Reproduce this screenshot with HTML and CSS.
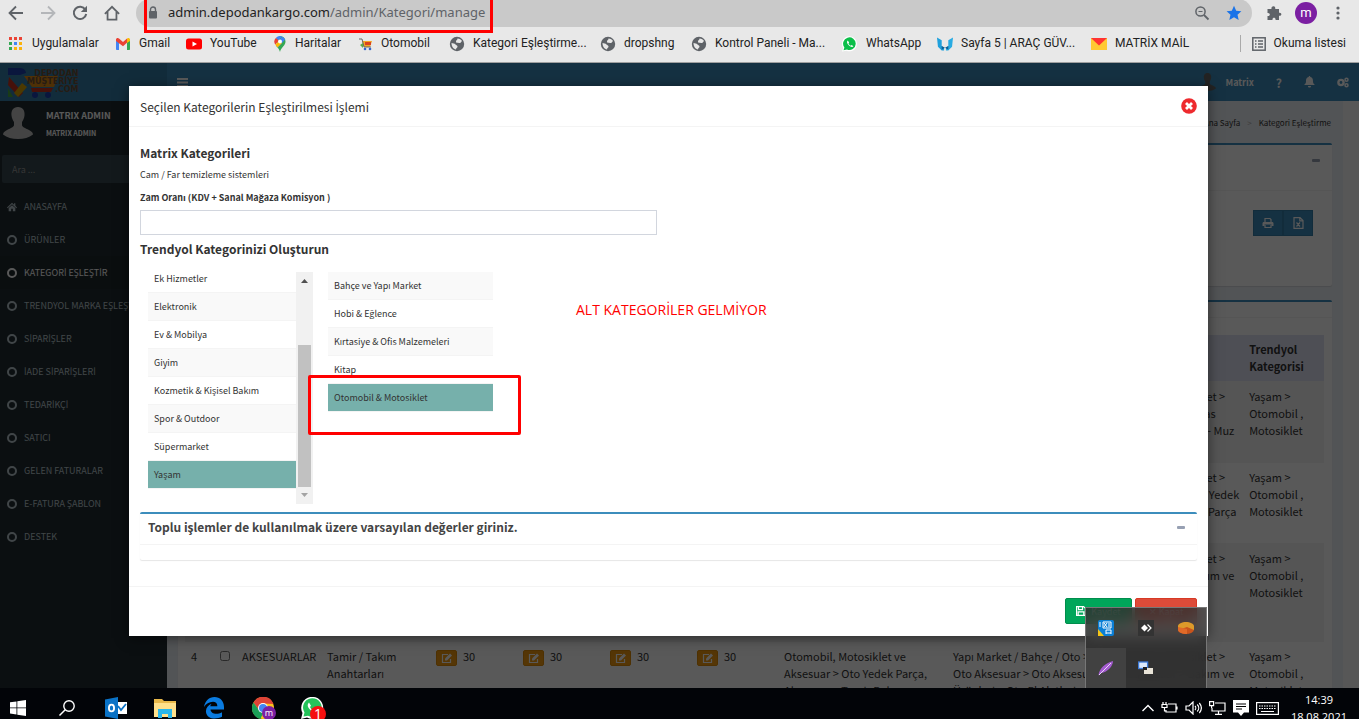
FILE: index.html
```html
<!DOCTYPE html>
<html lang="tr">
<head>
  <meta charset="UTF-8">
  <meta name="viewport" content="width=device-width, initial-scale=1.0">
  <title>Kategori Eşleştirme</title>
  <link rel="stylesheet" href="styles.css">
</head>
<body>

  <!-- shared icons -->
  <svg class="sprite" aria-hidden="true">
    <symbol id="i-globe" viewBox="0 0 16 16"><circle cx="8" cy="8" r="7.2" fill="#5f6368"/><path d="M2.500 7c1.500.5 3 .2 4 1.500.8 1 2.200.800 2 2.200-.2 1-1.500 1.300-1.500 2.800C4.500 13 2.500 10.500 2.500 7zM8.500 2.600c2 0 3.700 1 4.500 2.500-.8.600-.9 1.400-1.800 1.900-1 .4-1.600-.5-2.400-.2-1 .3-2-.4-1.800-1.500.2-1 1.500-1.200 1.500-2.700z" fill="#e8e8e8"/></symbol>
    <symbol id="i-circle" viewBox="0 0 10 12"><circle cx="5" cy="6" r="4" fill="none" stroke="currentColor" stroke-width="2"/></symbol>
    <symbol id="i-edit" viewBox="0 0 12 12"><path d="M9.500 7v3.500h-8v-8H7" fill="none" stroke="currentColor" stroke-width="1.200"/><path d="M4 6.500 9 1.500l2 2-5 5H4z" fill="currentColor"/></symbol>
    <symbol id="i-user" viewBox="0 0 30 32"><path d="M15 0c5 0 7 4 6.500 8.500-.3 3-1.500 5-2.500 6.500v3c0 2 3 3 7 5 3 1.500 4 3 4 4.500-4 3-9 4.500-15 4.500S4 30.500 0 27.500C0 26 1 24.500 4 23c4-2 7-3 7-5v-3C10 13.500 8.800 11.500 8.500 8.500 8 4 10 0 15 0z" fill="currentColor"/></symbol>
  </svg>

  <header class="browser">
    <div class="toolbar">
      <button class="tool-btn" aria-label="Geri"><svg width="16" height="16" viewBox="0 0 16 16"><path d="M15 8H2M8 1.500 1.500 8 8 14.500" fill="none" stroke="#5f6368" stroke-width="1.800"/></svg></button>
      <button class="tool-btn" aria-label="İleri"><svg width="16" height="16" viewBox="0 0 16 16"><path d="M1 8h13M8 1.500 14.500 8 8 14.500" fill="none" stroke="#b4b6b9" stroke-width="1.800"/></svg></button>
      <button class="tool-btn" aria-label="Yenile"><svg width="16" height="16" viewBox="0 0 16 16"><path d="M13.300 4.500A6.200 6.200 0 1 0 14.200 9" fill="none" stroke="#5f6368" stroke-width="2"/><path d="M15 .8V7H8.800z" fill="#5f6368"/></svg></button>
      <button class="tool-btn" aria-label="Ana sayfa"><svg width="16" height="16" viewBox="0 0 18 18"><path d="M1 10 9 2l8 8M4 8v8.500h10V8" fill="none" stroke="#5f6368" stroke-width="2"/></svg></button>
      <div class="address">
        <svg width="10" height="14" viewBox="0 0 10 14"><path d="M2.500 6V3.500a2.500 2.500 0 0 1 5 0V6" fill="none" stroke="#5f6368" stroke-width="1.400"/><rect x="1" y="5" width="8" height="7.500" rx="1" fill="#5f6368"/></svg>
        <span class="url">admin.depodankargo.com<span class="path">/admin/Kategori/manage</span></span>
        <svg width="16" height="16" viewBox="0 0 16 16"><circle cx="6.500" cy="6.500" r="4.600" fill="none" stroke="#5f6368" stroke-width="1.500"/><path d="M10 10l4.500 4.500" stroke="#5f6368" stroke-width="1.800"/><path d="M4.500 6.500h4" stroke="#5f6368"/></svg>
        <svg width="16" height="16" viewBox="0 0 16 16"><path d="M8 .8l2.200 4.900 5.200.5-3.900 3.500 1.200 5.300L8 12.200 3.300 15l1.200-5.300L.6 6.200l5.200-.5z" fill="#1a73e8"/></svg>
      </div>
      <svg width="16" height="16" viewBox="0 0 16 16"><path d="M1.500 4h4c-.8-3 3.500-4 3.800-1 .1.400 0 .8-.2 1H13v3.800c3-.8 3.300 3.700 0 3V15H9.500c.7-3-3.500-3.200-3 0H1.500v-4c3 .8 3.200-3.500 0-3z" fill="#5f6368"/></svg>
      <span class="profile">m</span>
      <svg width="4" height="16" viewBox="0 0 4 16" fill="#5f6368"><circle cx="2" cy="3" r="1.600"/><circle cx="2" cy="8" r="1.600"/><circle cx="2" cy="13" r="1.600"/></svg>
    </div>
    <nav class="bookmarks">
      <a href="#"><svg width="16" height="16" viewBox="0 0 16 16"><path d="M1 1h3v3H1zM11 1h3v3h-3zM6 1h3v3H6z" fill="#ea4335"/><path d="M1 6h3v3H1zM1 11h3v3H1z" fill="#34a853"/><path d="M6 6h3v3H6z" fill="#4285f4"/><path d="M11 6h3v3h-3zM6 11h3v3H6zM11 11h3v3h-3z" fill="#fbb30c"/></svg>Uygulamalar</a>
      <a href="#"><svg width="16" height="16" viewBox="0 0 16 16"><path d="M1 3.500h3V14H1.800A.8.800 0 0 1 1 13.200z" fill="#4285f4"/><path d="M12 3.500h3v9.700a.8.800 0 0 1-.8.800H12z" fill="#34a853"/><path d="M1 3.500C1 2 3 1.500 4 2.500L8 6l4-3.500v4.200L8 10.200 1 5z" fill="#ea4335"/><path d="M12 2.500c1-1 3-.5 3 1V5l-3 2z" fill="#fbbc04"/></svg>Gmail</a>
      <a href="#"><svg width="16" height="16" viewBox="0 0 16 16"><rect y="2.500" width="16" height="11" rx="2.500" fill="#f00"/><path d="M6.500 5.500v5L11 8z" fill="#fff"/></svg>YouTube</a>
      <a href="#"><svg width="14" height="16" viewBox="0 0 14 16"><path d="M7 0a5.500 5.500 0 0 1 5.500 5.500C12.500 10 8 11 7 16 6.500 13.500 4.500 11.500 3 9.800z" fill="#34a853"/><path d="M2.800 2A5.500 5.500 0 0 1 9 .4L5 5z" fill="#4285f4"/><path d="M9 .4a5.500 5.500 0 0 1 3.100 3L5 11.500 3 9.500z" fill="#4285f4"/><path d="M2.800 2 6 4.500 2.300 8.700A5.500 5.500 0 0 1 2.800 2z" fill="#ea4335"/><path d="M2.300 8.700 6 5l3 2-4.500 4.500z" fill="#fbbc04"/><circle cx="7" cy="5.500" r="2" fill="#fff"/></svg>Haritalar</a>
      <a href="#"><svg width="14" height="16" viewBox="0 0 14 16"><path d="M3 5h10l-2 6H5z" fill="#f5a623"/><path d="M6 6h6v3H6z" fill="#d9431e"/><path d="M0 3h3l2 8h7" fill="none" stroke="#666"/><path d="M1 9l3-2v5z" fill="#5aab4a"/><circle cx="6" cy="13" r="1.300" fill="#36c"/><circle cx="11" cy="13" r="1.300" fill="#36c"/></svg>Otomobil</a>
      <a href="#"><svg width="16" height="16"><use href="#i-globe"/></svg>Kategori Eşleştirme...</a>
      <a href="#"><svg width="16" height="16"><use href="#i-globe"/></svg>dropshng</a>
      <a href="#"><svg width="16" height="16"><use href="#i-globe"/></svg>Kontrol Paneli - Ma...</a>
      <a href="#"><svg width="16" height="16" viewBox="0 0 16 16"><path d="M0 15.500 1.200 12A7.500 7.500 0 1 1 4.500 14.700z" fill="#fff"/><path d="M1.500 14.200 2.400 11.500A6.300 6.300 0 1 1 5 13.500z" fill="#0cbf4a"/><path d="M5.800 4.500c-1.500 1-.8 3 1 4.800s3.600 2.300 4.600 1l-1.700-1.200-1 .6C7.700 9.300 6.900 8.400 6.500 7.500l.6-.9z" fill="#fff"/></svg>WhatsApp</a>
      <a href="#"><svg width="16" height="16" viewBox="0 0 17 16"><path d="M0 1l5 3v6l2.500 2v3H5l-4-4z" fill="#1fa0dc"/><path d="M17 1l-5 3v6l-2.500 2v3H12l4-4z" fill="#29abe2"/><path d="M5 10l3.500 2L12 10v4l-3.500-2L5 14z" fill="#0b5f95"/></svg>Sayfa 5 | ARAÇ GÜV...</a>
      <a href="#"><svg width="16" height="16" viewBox="0 0 16 16"><path d="M0 2h16v12H0z" fill="#ffc933"/><path d="M0 2h16L8 9.500z" fill="#f33"/></svg>MATRİX MAİL</a>
      <a href="#" class="reading"><svg width="14" height="14" viewBox="0 0 14 14"><rect x=".8" y=".8" width="12.400" height="12.400" fill="none" stroke="#5f6368" stroke-width="1.500"/><path d="M3 4h1.500M3 7h1.500M3 10h1.500M6 4h5M6 7h5M6 10h5" stroke="#5f6368" stroke-width="1.400"/></svg>Okuma listesi</a>
    </nav>
  </header>

  <div class="page">
    <div class="app">
      <header class="main-header">
        <a href="#" class="logo">
          <svg width="56" height="32" viewBox="0 0 56 32"><path d="M0 2h12c4 0 6 3 6 5l-6 2H0z" fill="#1d3fb0"/><path d="M1 11l14 16-4 4L0 19z" fill="#c8321e"/><path d="M0 22l5 9H0z" fill="#49a942"/><path d="M14 17l5 4-9 10-4-4z" fill="#d9a400"/><path d="M16 10h34l-4 11H24z" fill="#e08a12"/><path d="M23 22h22l-2 4H24z" fill="#c8321e"/><circle cx="27" cy="29" r="3" fill="#1d3fb0"/><circle cx="40" cy="29" r="3" fill="#1d3fb0"/></svg>
          <span>DEPODAN<br>MÜŞTERİYE<br>.COM</span>
        </a>
        <nav class="navbar">
          <button class="nav-btn" aria-label="Menü"><svg width="11" height="9" viewBox="0 0 11 9"><path d="M0 1h11M0 4.500h11M0 8h11" stroke="currentColor" stroke-width="1.800"/></svg></button>
          <div class="nav-right">
            <span class="nav-user"><svg width="17" height="18"><use href="#i-user"/></svg>Matrix</span>
            <b>?</b>
            <svg width="11" height="12" viewBox="0 0 11 12"><path d="M5.500 0c.6 0 .8.600.8 1C9 1.600 9 4 9 5.500c.1 1.700.7 2.700 2 3.500H0c1.300-.8 1.900-1.800 2-3.500C2 4 2 1.600 4.700 1c0-.4.2-1 .8-1zM4 10h3c0 1-.6 1.500-1.500 1.500S4 11 4 10z" fill="currentColor"/></svg>
            <svg width="12" height="11" viewBox="0 0 12 11"><circle cx="4" cy="5.500" r="2.600" fill="none" stroke="currentColor" stroke-width="2.400"/><circle cx="9.500" cy="2.700" r="1.500" fill="none" stroke="currentColor" stroke-width="1.500"/><circle cx="9.500" cy="8.300" r="1.500" fill="none" stroke="currentColor" stroke-width="1.500"/></svg>
          </div>
        </nav>
      </header>

      <div class="wrapper">
        <aside class="sidebar">
          <div class="user-panel">
            <svg width="30" height="32"><use href="#i-user"/></svg>
            <div>
              <p>MATRIX ADMIN</p>
              <small>MATRIX ADMIN</small>
            </div>
          </div>
          <input class="search" type="text" placeholder="Ara ..." aria-label="Ara">
          <ul class="menu">
            <li><a href="#"><svg width="10" height="12" viewBox="0 0 12 12"><path d="M6 1 0 6.500l.8.900L6 2.800l5.200 4.600.8-.9-2-1.900V1.500H8.500v1.700zM2 7.300V11h3V8h2v3h3V7.300L6 3.800z" fill="currentColor"/></svg>ANASAYFA</a></li>
            <li><a href="#"><svg width="10" height="12"><use href="#i-circle"/></svg>ÜRÜNLER</a></li>
            <li class="active"><a href="#"><svg width="10" height="12"><use href="#i-circle"/></svg><span>KATEGOR<i>İ</i> EŞLEŞT<i>İ</i>R</span></a></li>
            <li><a href="#"><svg width="10" height="12"><use href="#i-circle"/></svg><span>TRENDYOL MARKA EŞLEŞT<i>İ</i>R</span></a></li>
            <li><a href="#"><svg width="10" height="12"><use href="#i-circle"/></svg><span>S<i>İ</i>PAR<i>İ</i>ŞLER</span></a></li>
            <li><a href="#"><svg width="10" height="12"><use href="#i-circle"/></svg><span><i>İ</i>ADE S<i>İ</i>PAR<i>İ</i>ŞLER<i>İ</i></span></a></li>
            <li><a href="#"><svg width="10" height="12"><use href="#i-circle"/></svg><span>TEDAR<i>İ</i>KÇ<i>İ</i></span></a></li>
            <li><a href="#"><svg width="10" height="12"><use href="#i-circle"/></svg>SATICI</a></li>
            <li><a href="#"><svg width="10" height="12"><use href="#i-circle"/></svg>GELEN FATURALAR</a></li>
            <li><a href="#"><svg width="10" height="12"><use href="#i-circle"/></svg>E-FATURA ŞABLON</a></li>
            <li><a href="#"><svg width="10" height="12"><use href="#i-circle"/></svg>DESTEK</a></li>
          </ul>
        </aside>

        <main class="content">
          <div class="breadcrumb"><a href="#">Ana Sayfa</a><span class="sep">&gt;</span><span>Kategori Eşleştirme</span></div>
          <section class="box box-filter">
            <div class="box-header"><button class="collapse" aria-label="Daralt"></button></div>
            <div class="box-tools">
              <button aria-label="Yazdır"><svg width="12" height="12" viewBox="0 0 12 12"><path d="M3 5V1.500h5L9 2.500V5M3 8v2.500h6V8" fill="none" stroke="currentColor" stroke-width="1.200"/><path d="M.5 9V6.500C.5 5.500 1 5 2 5h8c1 0 1.500.5 1.500 1.500V9H9.500V7.500h-7V9z" fill="currentColor"/></svg></button>
              <button aria-label="Excel"><svg width="11" height="12" viewBox="0 0 11 12"><path d="M1 .6h6l3 3v7.800H1zM6.800.6v3.200H10M3.500 5.500l3.500 4M7 5.500l-3.500 4" fill="none" stroke="currentColor" stroke-width="1.200"/></svg></button>
            </div>
          </section>

          <section class="box box-list">
            <div class="box-header"></div>
            <table>
              <colgroup>
                <col class="c-no"><col class="c-check"><col class="c-group"><col class="c-name">
                <col class="c-rate"><col class="c-rate"><col class="c-rate"><col class="c-rate">
                <col class="c-path"><col class="c-n11"><col class="c-gg"><col>
              </colgroup>
              <thead>
                <tr><th colspan="11"></th><th>Trendyol<br>Kategorisi</th></tr>
              </thead>
              <tbody>
                <tr><td colspan="10"></td><td>Otomobil, Motosiklet &gt;<br>Aksesuarlar &gt; Paspas<br>Temizlik, Oto Koku - Muz</td><td>Yaşam &gt;<br>Otomobil ,<br>Motosiklet</td></tr>
                <tr><td colspan="10"></td><td>Otomobil, Motosiklet &gt;<br>Oto Aksesuar &gt; Oto Yedek<br>Oto, Motor &gt; Oto El Parça</td><td>Yaşam &gt;<br>Otomobil ,<br>Motosiklet</td></tr>
                <tr class="tall"><td colspan="10"></td><td>Otomobil, Motosiklet &gt;<br>Oto Aksesuar &gt; Bakım ve</td><td>Yaşam &gt;<br>Otomobil ,<br>Motosiklet</td></tr>
                <tr>
                  <td>4</td>
                  <td><input type="checkbox" aria-label="4. satırı seç"></td>
                  <td>AKSESUARLAR</td>
                  <td>Tamir / Takım<br>Anahtarları</td>
                  <td><button class="edit" aria-label="Düzenle"><svg width="12" height="12"><use href="#i-edit"/></svg></button>30</td>
                  <td><button class="edit" aria-label="Düzenle"><svg width="12" height="12"><use href="#i-edit"/></svg></button>30</td>
                  <td><button class="edit" aria-label="Düzenle"><svg width="12" height="12"><use href="#i-edit"/></svg></button>30</td>
                  <td><button class="edit" aria-label="Düzenle"><svg width="12" height="12"><use href="#i-edit"/></svg></button>30</td>
                  <td>Otomobil, Motosiklet ve<br>Aksesuar &gt; Oto Yedek Parça,<br>Aksesuar &gt; Tamir Bakım</td>
                  <td>Yapı Market / Bahçe / Oto &gt;<br>Oto Aksesuar &gt; Oto Aksesuar<br>Ürünleri &gt; Oto El Aletleri</td>
                  <td>Otomobil, Motosiklet &gt;<br>Oto Aksesuar &gt; Bakım ve</td>
                  <td>Yaşam &gt;<br>Otomobil ,<br>Motosiklet</td>
                </tr>
              </tbody>
            </table>
          </section>
        </main>
        <div class="page-scroll"></div>
      </div>
    </div>

    <div class="modal-backdrop">
      <div class="modal" role="dialog" aria-labelledby="modal-title">
        <div class="modal-header">
          <h4 id="modal-title">Seçilen Kategorilerin Eşleştirilmesi <i>İ</i>şlemi</h4>
          <button class="close" aria-label="Kapat"><svg width="16" height="16" viewBox="0 0 16 16"><circle cx="8" cy="8" r="7.800" fill="#ee2a2e"/><path d="M5 5l6 6M11 5l-6 6" stroke="#fff" stroke-width="2.800"/></svg></button>
        </div>
        <div class="modal-body">
          <h5>Matrix Kategorileri</h5>
          <p>Cam / Far temizleme sistemleri</p>
          <label for="rate">Zam Oranı (KDV + Sanal Mağaza Komisyon )</label>
          <input id="rate" class="rate" type="text">
          <h5>Trendyol Kategorinizi Oluşturun</h5>
          <div class="pickers">
            <div class="picker-scroll">
              <ul>
                <li>Ek Hizmetler</li>
                <li>Elektronik</li>
                <li>Ev &amp; Mobilya</li>
                <li>Giyim</li>
                <li>Kozmetik &amp; Kişisel Bakım</li>
                <li>Spor &amp; Outdoor</li>
                <li>Süpermarket</li>
                <li class="selected">Yaşam</li>
              </ul>
              <div class="scrollbar">
                <svg width="17" height="17" viewBox="0 0 17 17"><path d="M5 11h7L8.500 7z" fill="#505050"/></svg>
                <div class="thumb"></div>
                <svg width="17" height="17" viewBox="0 0 17 17"><path d="M5 6h7l-3.500 4z" fill="#a3a3a3"/></svg>
              </div>
            </div>
            <ul class="picker-sub">
              <li>Bahçe ve Yapı Market</li>
              <li>Hobi &amp; Eğlence</li>
              <li>Kırtasiye &amp; Ofis Malzemeleri</li>
              <li>Kitap</li>
              <li class="selected">Otomobil &amp; Motosiklet</li>
            </ul>
          </div>
          <section class="box box-defaults">
            <div class="box-header"><h5>Toplu işlemler de kullanılmak üzere varsayılan değerler giriniz.</h5><button class="collapse" aria-label="Daralt"></button></div>
          </section>
        </div>
        <div class="modal-footer">
          <button class="btn btn-save"><svg width="10" height="10" viewBox="0 0 10 10"><path d="M.6.600h7l1.800 1.800v7H.6zM2.500.6v3h4v-3M2.200 9.400v-3.500h5.600v3.500" fill="none" stroke="#fff" stroke-width="1.200"/></svg>Kaydet</button>
          <button class="btn btn-close">✕ Kapat</button>
        </div>
      </div>
    </div>
  </div>

  <footer class="taskbar">
    <div class="tasks">
      <svg width="16" height="16" viewBox="0 0 16 16"><path d="M0 2.300 6.500 1.400v6.100H0zM7.300 1.300 16 0v7.500H7.300zM0 8.300h6.500v6.100L0 13.500zM7.300 8.300H16V16l-8.700-1.300z" fill="#fff"/></svg>
      <svg width="18" height="18" viewBox="0 0 18 18"><circle cx="11" cy="7" r="5.200" fill="none" stroke="#fff" stroke-width="1.400"/><path d="M7.200 10.800 1.500 16.500" stroke="#fff" stroke-width="1.500"/></svg>
      <svg width="22" height="22" viewBox="0 0 22 22"><path d="M10 5h12v12H10z" fill="#fff"/><path d="M11 6h10v10H11z" fill="#2a78c5"/><path d="M12 5h10v12H12z" fill="#fff"/><path d="M13 9l3 4 5-6" fill="none" stroke="#0a72c6" stroke-width="1.800"/><path d="M0 2.500 13 0v22L0 19.500z" fill="#0a72c6"/><ellipse cx="6.500" cy="11" rx="2.600" ry="3.400" fill="none" stroke="#fff" stroke-width="1.800"/></svg>
      <svg width="22" height="20" viewBox="0 0 22 20"><path d="M0 1h8l2 2h12v16H0z" fill="#e8b84a"/><path d="M0 5h22v14H0z" fill="#ffe08a"/><path d="M4 11h14v9h-4v-4H8v4H4z" fill="#29b6ea"/></svg>
      <svg width="20" height="22" viewBox="0 0 20 22"><path d="M0 10C1 4 5 0 10.500 0 16 0 20 4 20 10v2.500H6.500c.3 4.500 6.500 5.500 11.500 2.700v4.500c-6 3-15 2.500-16-4.500-.5-4 2-7 5.500-8.500C6.500 8 6.300 9 6.300 9.300h7C13.500 6 11.500 4.800 9 4.800 5 4.800 2 7 0 10z" fill="#0a7be0"/></svg>
      <svg width="24" height="22" viewBox="0 0 24 22"><circle cx="11" cy="11" r="11" fill="#fcc31e"/><path d="M1.500 5.500A11 11 0 0 1 21.500 7L11 6.500 7 13z" fill="#de4437"/><path d="M1.500 5.500 7 13l4 3-2.500 6A11 11 0 0 1 1.500 5.500z" fill="#1a9e57"/><circle cx="11" cy="11" r="5" fill="#fff"/><circle cx="11" cy="11" r="4" fill="#4285f4"/><circle cx="17" cy="16" r="7" fill="#7b1fa2"/><text x="17" y="19" text-anchor="middle" class="badge-text">m</text></svg>
      <svg width="25" height="23" viewBox="0 0 25 23"><path d="M0 22 1.500 16A11 11 0 1 1 6 20.500z" fill="#fff"/><path d="M2.500 19.500 3.500 15.500A9.300 9.300 0 1 1 7 18.700z" fill="#23c35a"/><path d="M8 5.500C5.500 8 7 11 10 13.500s5.500 3 7 1.500l-3-2.500-1.500 1C11 13 9.500 11.500 9 10l1-1.200z" fill="#fff"/><circle cx="17" cy="17" r="8" fill="#f50f0f"/><text x="17" y="22" text-anchor="middle" class="badge-count">1</text></svg>
    </div>
    <div class="tray">
      <svg width="12" height="8" viewBox="0 0 12 8"><path d="M.5 7 6 1.500 11.500 7" fill="none" stroke="#fff" stroke-width="1.400"/></svg>
      <svg width="17" height="14" viewBox="0 0 17 14"><path d="M7 3h8v8H5V9M16 5.500v3" fill="none" stroke="#fff" stroke-width="1.200"/><path d="M1 3.500h5v3H1zM2 1v2M5 1v2M3.500 7v3H5" fill="none" stroke="#fff" stroke-width="1.200"/></svg>
      <svg width="17" height="14" viewBox="0 0 17 14"><path d="M1 5h3l4-4v12L4 9H1zM10 5c1 1 1 3 0 4M12.200 3.500c2 2 2 5 0 7M14.300 2c2.500 3 2.500 7 0 10" fill="none" stroke="#fff" stroke-width="1.200"/></svg>
      <svg width="17" height="14" viewBox="0 0 17 14"><path d="M6 2h10v8H3V7M9.500 10v3M6 13.300h7" fill="none" stroke="#fff" stroke-width="1.200"/><path d="M.6.600h4v4h-4zM2.600 4.600V7" fill="none" stroke="#fff" stroke-width="1.200"/></svg>
      <svg width="16" height="16" viewBox="0 0 16 16"><path d="M0 0h16v12.500h-5L8 16l-3-3.500H0z" fill="#fff"/><path d="M3 4h10M3 6.500h10M3 9h6" stroke="#000"/></svg>
      <svg width="23" height="13" viewBox="0 0 23 13"><rect x=".6" y=".6" width="21.800" height="11.800" fill="none" stroke="#fff" stroke-width="1.200"/><path d="M3 4h17M3 6.500h17" stroke="#fff" stroke-width="1.200" stroke-dasharray="1.500 1"/><path d="M5 9.500h13" stroke="#fff"/></svg>
      <div class="clock">14:39<br>18.08.2021</div>
    </div>
  </footer>

  <!-- hidden icons flyout -->
  <div class="flyout">
    <div><svg width="16" height="16" viewBox="0 0 16 16"><rect width="16" height="16" rx="2" fill="#0a7fd6"/><path d="M0 9l6 7H0z" fill="#f5c518"/><path d="M5 2h8v6H5zM6 3l3 4M9 3L6 7M11 3v4M8 10h5M8 13h5M8 10v4M13 10v4M2 2v5" fill="none" stroke="#fff"/></svg></div>
    <div><svg width="16" height="16" viewBox="0 0 16 16"><rect width="16" height="16" fill="#333"/><path d="M3 8l3.500-3.500L10 8l-3.500 3.500z" fill="#fff"/><path d="M9.500 4.500 13 8l-3.500 3.500" fill="none" stroke="#fff" stroke-width="1.200"/></svg></div>
    <div><svg width="16" height="12" viewBox="0 0 16 12"><ellipse cx="8" cy="7.500" rx="8" ry="4.500" fill="#c9541c"/><path d="M0 4c0-2 4-4 8-4s8 2 8 4v4L9 5 0 8z" fill="#dd9a2a"/><path d="M0 5l9 2v5C4 12 0 10 0 8z" fill="#e06a28"/></svg></div>
    <div class="hover"><svg width="16" height="16" viewBox="0 0 16 16"><path d="M.5 15.500C1 9 7 3 15 1c0 5-5 11-12 12z" fill="#a45cd0"/><path d="M1 15 13 3" stroke="#e9d3f7"/></svg></div>
    <div><svg width="16" height="14" viewBox="0 0 16 14"><rect x=".6" y="1" width="9" height="6.500" fill="#dce9fa" stroke="#3d7bd9" stroke-width="1.300"/><path d="M6 7h9v6H6z" fill="#e9e4d8"/><path d="M5 6h4v3H5z" fill="#222"/></svg></div>
  </div>

  <div class="mark mark-url"></div>
  <div class="mark mark-item"></div>
  <div class="mark-text">ALT KATEGORİLER GELMİYOR</div>

</body>
</html>
```
FILE: styles.css
```css
* {
  box-sizing: border-box;
}

body {
  margin: 0;
  height: 100vh;
  display: flex;
  flex-direction: column;
  overflow: hidden;
  position: relative;
  font-family: "Noto Sans CJK SC", "Open Sans", sans-serif;
  font-size: 11px;
  line-height: 17px;
  color: #333;
}

a {
  color: inherit;
  text-decoration: none;
}

button {
  border: 0;
  padding: 0;
  background: none;
  color: inherit;
  font: inherit;
}

input {
  font: inherit;
}

h4, h5, p, ul {
  margin: 0;
  padding: 0;
  list-style: none;
}

svg {
  flex: none;
  display: block;
}

/* dotted capital I, missing from the main font */
i {
  font-family: "Open Sans", sans-serif;
  font-style: normal;
  line-height: 1;
}

.sprite {
  position: absolute;
  width: 0;
  height: 0;
}

/* browser chrome */
.browser {
  flex: none;
  background: #e8e8e8;
  border-bottom: 1px solid #a0a0a0;
  font-family: Roboto, sans-serif;
  font-size: 12px;
  color: #222;
}

.toolbar {
  height: 25px;
  display: flex;
  align-items: center;
  padding: 0 19px 0 8px;
}

.tool-btn {
  width: 32px;
  flex: none;
}

.address {
  flex: 1;
  height: 28px;
  display: flex;
  align-items: center;
  gap: 16px;
  padding: 0 10px 0 12px;
  margin-right: 14px;
  background: #c9c9c9;
  border-radius: 14px;
}

.url {
  flex: 1;
  margin-left: -6px;
  font-family: "Noto Sans", sans-serif;
  font-size: 13px;
  color: #222;
}

.path {
  color: #5f6368;
}

.profile {
  width: 22px;
  height: 22px;
  margin: 0 19px 0 13px;
  border-radius: 50%;
  background: #7b1fa2;
  color: #fff;
  font-size: 13px;
  line-height: 21px;
  text-align: center;
}

.bookmarks {
  height: 37px;
  display: grid;
  grid-template-columns: 107px 71px 87px 86px 90px 151px 91px 151px 95px 154px 1fr auto;
  align-items: center;
  padding: 0 13px 0 8px;
}

.bookmarks a {
  display: flex;
  align-items: center;
  gap: 8px;
  white-space: nowrap;
}

.bookmarks .reading {
  padding-left: 11px;
  border-left: 1px solid #aaa;
}

/* admin panel */
.page {
  flex: 1;
  min-height: 0;
  position: relative;
  overflow: hidden;
}

.app {
  height: 100%;
  display: flex;
  flex-direction: column;
}

.main-header {
  flex: none;
  height: 38px;
  display: flex;
  background: #3c8dbc;
  color: #fff;
}

.logo {
  width: 167px;
  display: flex;
  align-items: center;
  padding-left: 8px;
  background: #367fa9;
}

.logo span {
  margin-left: -37px;
  font-family: "DejaVu Sans", sans-serif;
  font-size: 8px;
  font-weight: bold;
  line-height: 8px;
  text-align: right;
  color: #6e5037;
}

.navbar {
  flex: 1;
  display: flex;
  align-items: center;
  justify-content: space-between;
  padding: 0 10px;
}

.nav-right {
  display: flex;
  align-items: center;
  gap: 22px;
  font-size: 9px;
}

.nav-right b {
  font-size: 12px;
}

.nav-user {
  display: flex;
  align-items: center;
  gap: 9px;
  font-weight: bold;
}

.nav-user svg {
  color: #666;
}

.wrapper {
  flex: 1;
  min-height: 0;
  display: flex;
}

.sidebar {
  width: 167px;
  flex: none;
  overflow: hidden;
  background: #222d32;
  color: #b8c7ce;
  font-size: 9px;
}

.user-panel {
  display: flex;
  gap: 13px;
  height: 54px;
  padding: 6px 3px;
  color: #fff;
}

.user-panel svg {
  color: #c4c4c4;
}

.user-panel p {
  font-weight: bold;
  line-height: 18px;
}

.user-panel small {
  display: block;
  font-size: 7px;
  font-weight: bold;
}

.search {
  display: block;
  width: 163px;
  height: 28px;
  margin: 0 2px 7px;
  padding: 0 10px;
  border: 0;
  border-radius: 2px;
  background: #374850;
  color: #999;
}

.search::placeholder {
  color: #999;
}

.menu a {
  display: flex;
  align-items: center;
  gap: 7px;
  height: 33px;
  padding-left: 7px;
  white-space: nowrap;
}

.menu .active {
  background: #1e282c;
  color: #fff;
}

.content {
  flex: 1;
  min-width: 0;
  padding: 0 11px;
  background: #ecf0f5;
}

.page-scroll {
  width: 16px;
  background: #fafafa;
}

.breadcrumb {
  display: flex;
  justify-content: flex-end;
  gap: 7px;
  padding: 13px 1px 12px;
  font-size: 8px;
}

.sep {
  color: #aaa;
}

.box {
  background: #fff;
  border-top: 2px solid #3c8dbc;
  border-radius: 2px;
  box-shadow: 0 1px 1px rgba(0, 0, 0, 0.1);
}

.box-header {
  display: flex;
  justify-content: space-between;
  border-bottom: 1px solid #f4f4f4;
}

.collapse {
  width: 8px;
  height: 3px;
  margin-left: auto;
  border-radius: 1px;
  background: #97a0b3;
}

.box-filter {
  height: 143px;
  margin-bottom: 14px;
}

.box-filter .box-header {
  height: 46px;
  padding: 14px 12px;
}

.box-tools {
  display: flex;
  justify-content: flex-end;
  padding: 19px;
}

.box-tools button {
  width: 30px;
  height: 26px;
  display: flex;
  align-items: center;
  justify-content: center;
  border: 1px solid #367fa9;
  background: #3c8dbc;
  color: #fff;
}

.box-list {
  padding-right: 8px;
  padding-left: 7px;
}

.box-list .box-header {
  height: 16px;
  margin: 0 -8px 17px -7px;
}

table {
  width: 100%;
  table-layout: fixed;
  border-collapse: collapse;
}

th, td {
  padding: 6px;
  text-align: left;
  vertical-align: top;
  white-space: nowrap;
}

th {
  background: #dfe1f3;
}

td {
  height: 81px;
  border-top: 1px solid #f4f4f4;
}

.tall td {
  height: 98px;
}

tbody tr:nth-child(odd) {
  background: #f4f4f4;
}

td input {
  width: 10px;
  height: 10px;
  margin: 3px 0;
}

.c-no { width: 29px; }
.c-check { width: 22px; }
.c-group { width: 85px; }
.c-name { width: 109px; }
.c-rate { width: 87px; }
.c-path { width: 169px; }
.c-n11 { width: 156px; }
.c-gg { width: 140px; }

.edit {
  width: 21px;
  height: 16px;
  display: inline-flex;
  align-items: center;
  justify-content: center;
  margin-right: 6px;
  vertical-align: middle;
  border: 1px solid #e08e0b;
  border-radius: 2px;
  background: #f39c12;
  color: #fff;
}

/* dialog */
.modal-backdrop {
  position: absolute;
  inset: 0;
  padding: 23px 151px 0 129px;
  background: rgba(0, 0, 0, 0.65);
}

.modal {
  background: #fff;
  box-shadow: 0 2px 12px rgba(0, 0, 0, 0.5);
}

.modal-header {
  display: flex;
  align-items: center;
  justify-content: space-between;
  height: 41px;
  padding: 0 11px;
  border-bottom: 1px solid #f4f4f4;
}

.modal-header h4 {
  font-size: 12px;
  font-weight: normal;
}

.modal-body {
  padding: 16px 11px 26px;
  font-size: 9px;
}

h5 {
  font-size: 12px;
  line-height: 20px;
}

.modal-body p {
  padding: 3px 0 6px;
}

.modal-body label {
  display: block;
  font-weight: bold;
}

.rate {
  display: block;
  width: 517px;
  height: 25px;
  margin: 4px 0;
  border: 1px solid #d2d6de;
}

.pickers {
  display: flex;
  gap: 15px;
  padding: 13px 8px 8px;
}

.picker-scroll {
  width: 165px;
  height: 232px;
  display: flex;
  overflow: hidden;
}

.picker-scroll ul {
  flex: 1;
  margin-top: -7px;
}

.picker-sub {
  width: 165px;
}

.pickers li {
  height: 28px;
  padding: 0 6px;
  line-height: 27px;
  border-bottom: 1px solid #f4f4f4;
}

.picker-scroll li:nth-child(even),
.picker-sub li:nth-child(odd) {
  background: #f9f9f9;
}

.pickers li.selected {
  background: #76b0ab;
}

.scrollbar {
  width: 17px;
  display: flex;
  flex-direction: column;
  background: #f1f1f1;
}

.thumb {
  flex: 1;
  margin: 56px 2px 0;
  background: #c1c1c1;
}

.box-defaults {
  height: 48px;
}

.box-defaults .box-header {
  height: 31px;
  padding: 3px 12px 0 8px;
}

.box-defaults .collapse {
  margin-top: 9px;
}

.box-defaults h5 {
  color: #444;
}

.modal-footer {
  display: flex;
  justify-content: flex-end;
  gap: 3px;
  padding: 11px 11px 12px;
  border-top: 1px solid #f4f4f4;
}

.btn {
  height: 26px;
  display: flex;
  align-items: center;
  justify-content: center;
  gap: 5px;
  border-radius: 2px;
  font-size: 9px;
  color: #fff;
}

.btn-save {
  width: 67px;
  border: 1px solid #008d4c;
  background: #00a65a;
}

.btn-close {
  width: 62px;
  border: 1px solid #d73925;
  background: #dd4b39;
}

/* windows taskbar */
.taskbar {
  flex: none;
  height: 31px;
  display: flex;
  align-items: flex-start;
  justify-content: space-between;
  overflow: hidden;
  background: #020408;
  color: #fff;
  font-family: "Open Sans", sans-serif;
}

.tasks {
  height: 40px;
  display: grid;
  grid-template-columns: 48px 47px 49px 50px 48px 49px auto;
  align-items: center;
  padding-left: 10px;
}

.tray {
  height: 40px;
  display: flex;
  align-items: center;
  gap: 7px;
  padding-right: 12px;
}

.clock {
  margin-left: 5px;
  text-align: center;
}

.badge-text {
  font-size: 9px;
  fill: #fff;
}

.badge-count {
  font-size: 14px;
  fill: #fff;
}

.flyout {
  position: absolute;
  right: 152px;
  bottom: 31px;
  width: 122px;
  height: 81px;
  display: grid;
  grid-template-columns: 40px 40px 40px;
  grid-template-rows: 40px 40px;
  border: 1px solid #777;
  border-bottom: 0;
  background: rgba(43, 43, 43, 0.82);
  backdrop-filter: blur(8px);
}

.flyout div {
  display: flex;
  align-items: center;
  justify-content: center;
}

.flyout .hover {
  background: #414141;
}

/* notes drawn over the screen */
.mark {
  position: absolute;
  border: 3px solid #f00;
}

.mark-url {
  left: 144px;
  top: -6px;
  width: 349px;
  height: 39px;
}

.mark-item {
  left: 308px;
  top: 375px;
  width: 213px;
  height: 60px;
  border-radius: 2px;
}

.mark-text {
  position: absolute;
  left: 576px;
  top: 301px;
  font-family: "Open Sans", sans-serif;
  font-size: 14px;
  color: #f00;
}
```
